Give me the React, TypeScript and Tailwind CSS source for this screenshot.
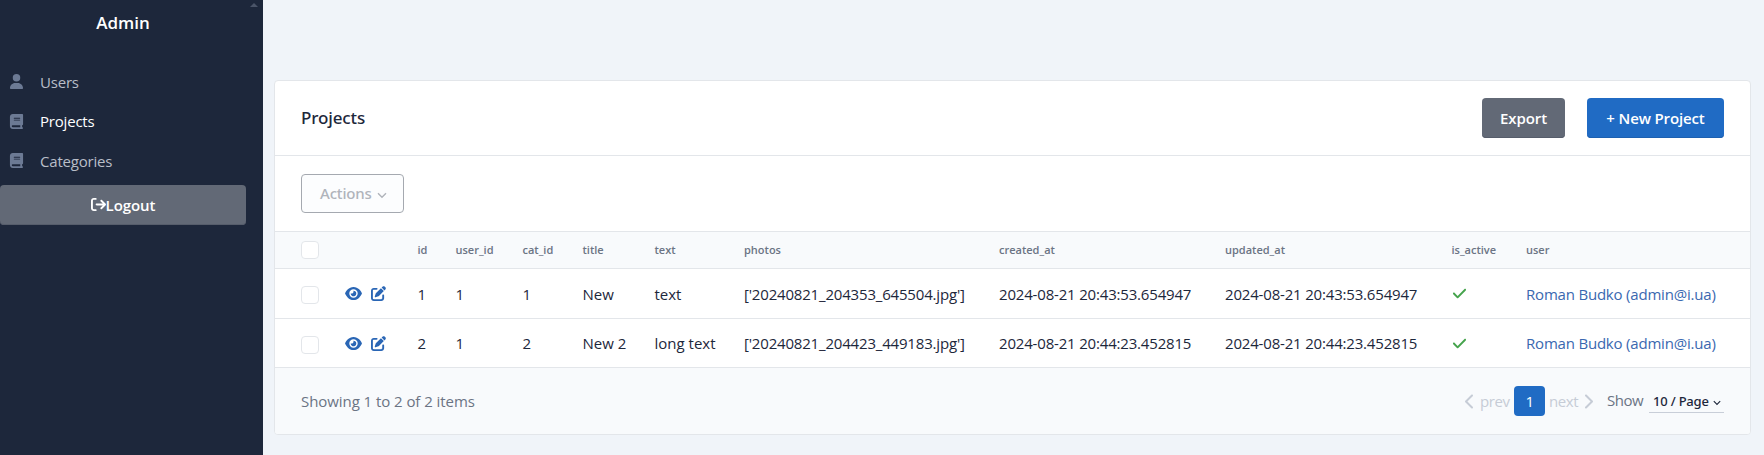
import type { ReactNode } from "react";
import {
  FaArrowRightFromBracket,
  FaBook,
  FaCheck,
  FaChevronLeft,
  FaChevronRight,
  FaEye,
  FaPenToSquare,
  FaUser,
} from "react-icons/fa6";

const rows = [
  {
    id: 1,
    userId: 1,
    catId: 1,
    title: "New",
    text: "text",
    photos: "['20240821_204353_645504.jpg']",
    date: "2024-08-21 20:43:53.654947",
  },
  {
    id: 2,
    userId: 1,
    catId: 2,
    title: "New 2",
    text: "long text",
    photos: "['20240821_204423_449183.jpg']",
    date: "2024-08-21 20:44:23.452815",
  },
];

const headings = ["id", "user_id", "cat_id", "title", "text", "photos", "created_at", "updated_at", "is_active", "user"];

const columns =
  "grid items-center pl-[26px] grid-cols-[44px_72.5px_38px_67px_60px_72px_89.5px_255px_226px_226.5px_74.5px_1fr]";

function CaretDown({ className }: { className: string }) {
  return (
    <svg viewBox="0 0 10 7" className={className} fill="none" stroke="currentColor" strokeWidth="1.4">
      <path d="M1 1.2l4 4 4-4" />
    </svg>
  );
}

function NavItem({ icon, label, active }: { icon: ReactNode; label: string; active?: boolean }) {
  return (
    <a className="flex h-[39.5px] items-center pl-[9px]">
      <span className="w-[31px] text-[15px] text-[#6c7a94]">{icon}</span>
      <span className={active ? "tracking-[-0.2px] text-white" : "tracking-[-0.2px] text-[#b9bec8]"}>{label}</span>
    </a>
  );
}

function Checkbox() {
  return <span className="block size-[18px] rounded border border-[#e3e6ea] bg-white" />;
}

export default function App() {
  return (
    <div className="flex h-[455px] w-[1764px] overflow-hidden bg-[#f0f4f9] font-['Open_Sans',sans-serif] text-[15px] leading-5 text-[#1d273b]">
      <aside className="relative w-[263px] shrink-0 bg-[#1d273b]">
        <svg viewBox="0 0 8 4" className="absolute left-[250px] top-[3px] h-1 w-2 text-[#4a5468]">
          <path d="M0 4l4-4 4 4z" fill="currentColor" />
        </svg>
        <h1 className="w-[246px] pt-[13px] text-center text-[17px] font-semibold leading-5 text-white">Admin</h1>
        <nav className="pt-[29px]">
          <NavItem icon={<FaUser />} label="Users" />
          <NavItem icon={<FaBook />} label="Projects" active />
          <NavItem icon={<FaBook />} label="Categories" />
        </nav>
        <button className="mt-[4.5px] flex h-10 w-[246px] items-center justify-center rounded bg-[#626976] font-semibold tracking-[-0.06px] text-white shadow-[inset_0_-1px_0_#565d6b]">
          <FaArrowRightFromBracket className="mb-px size-[15px]" />
          <span>Logout</span>
        </button>
      </aside>

      <main className="pl-[11px] pt-20">
        <section className="w-[1477px] overflow-hidden rounded border border-[#e3e6ea] bg-white">
          <header className="flex h-[75px] items-center border-b border-[#e3e6ea] pb-px pl-[26px] pr-[26px]">
            <h2 className="grow font-['Noto_Sans',sans-serif] text-[17px] font-medium tracking-[-0.12px]">Projects</h2>
            <button className="mr-[22px] h-10 w-[83px] rounded bg-[#626976] font-semibold tracking-[-0.1px] text-white shadow-[inset_0_-1px_0_#565d6b]">
              Export
            </button>
            <button className="h-10 w-[137px] rounded bg-[#206bc4] font-semibold tracking-[-0.13px] text-white shadow-[inset_0_-1px_0_#1d60b0]">
              + New Project
            </button>
          </header>

          <div className="h-[75px] pl-[26px] pt-[18px]">
            <button className="flex h-[39px] w-[103px] items-center rounded border border-[#a5a9b0] bg-[#fcfdfe] pb-px pl-[18px] font-['Noto_Sans',sans-serif] font-medium tracking-[-0.18px] text-[#b0b4bb]">
              Actions
              <CaretDown className="ml-[5px] mt-[4px] h-[7px] w-[10px]" />
            </button>
          </div>

          <div className={`${columns} h-[38px] border-y border-[#e3e6ea] bg-[#f8fafc] text-[11px] font-semibold text-[#6b7484]`}>
            <Checkbox />
            <span />
            {headings.map((heading) => (
              <span key={heading}>{heading}</span>
            ))}
          </div>

          {rows.map((row, index) => (
            <div
              key={row.id}
              className={`${columns} border-b border-[#e3e6ea] tracking-[-0.18px] ${index === 0 ? "h-[50px]" : "h-[49px]"}`}
            >
              <div className="pt-[3px]">
                <Checkbox />
              </div>
              <div className="flex items-center gap-[9px] text-[#2a66b5]">
                <FaEye className="h-[15px] w-[17px]" />
                <FaPenToSquare className="size-[15px]" />
              </div>
              <span>{row.id}</span>
              <span>{row.userId}</span>
              <span>{row.catId}</span>
              <span className="tracking-normal">{row.title}</span>
              <span className="tracking-normal">{row.text}</span>
              <span>{row.photos}</span>
              <span>{row.date}</span>
              <span>{row.date}</span>
              <FaCheck className="size-[15px] text-[#45a34c]" />
              <a className="tracking-[-0.2px] text-[#3a68b0]">Roman Budko (admin@i.ua)</a>
            </div>
          ))}

          <footer className="flex h-[66px] items-center bg-[#f8fafc] pl-[26px] text-[#6b7484]">
            <p className="w-[1164px] tracking-[-0.06px]">Showing 1 to 2 of 2 items</p>
            <div className="flex items-center tracking-[-0.4px] text-[#c6ccd6]">
              <FaChevronLeft className="h-[17px] w-[10px]" />
              <span className="ml-[5px] w-[34px]">prev</span>
              <span className="flex h-[30px] w-[31px] items-center justify-center rounded bg-[#206bc4] text-white">1</span>
              <span className="ml-[4px] w-[34px]">next</span>
              <FaChevronRight className="h-[17px] w-[10px]" />
            </div>
            <span className="mb-[3px] ml-[14px] w-[42px] tracking-[-0.5px]">Show</span>
            <span className="mt-px flex h-[22px] w-[75px] items-center border-b border-[#c8ced8] pl-1 font-['Noto_Sans',sans-serif] text-[13px] font-medium tracking-[-0.2px] text-[#1d273b]">
              10 / Page
              <CaretDown className="ml-[4px] mt-[3px] h-[6px] w-[8px]" />
            </span>
          </footer>
        </section>
      </main>
    </div>
  );
}
